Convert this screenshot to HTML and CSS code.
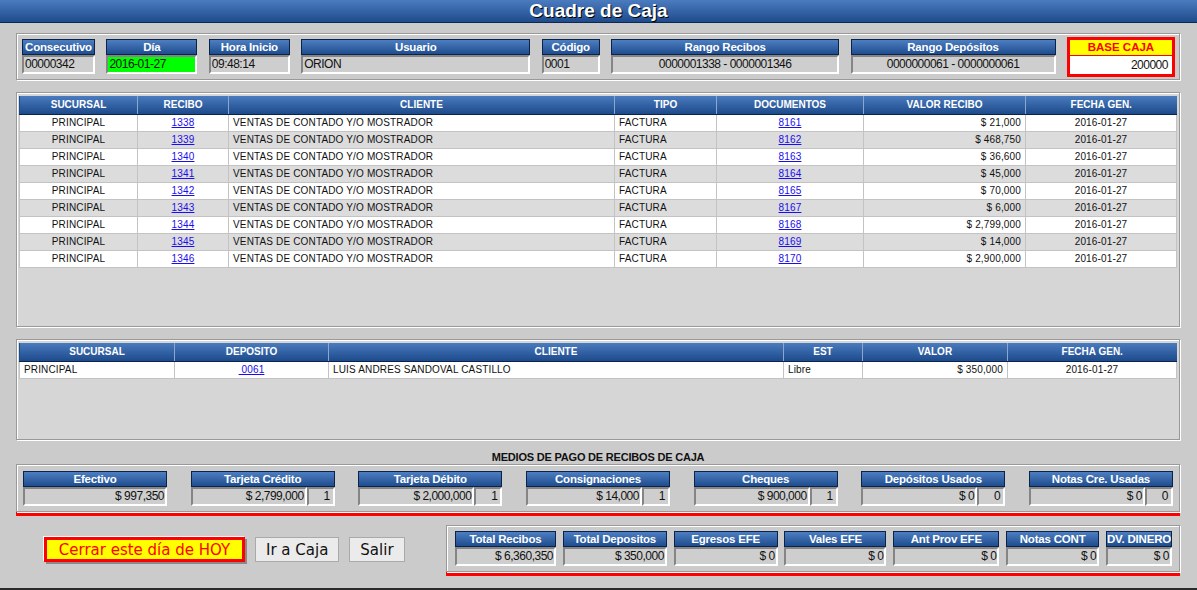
FILE: index.html
```html
<!DOCTYPE html>
<html lang="es">

<head>
    <meta charset="UTF-8">
    <title>Cuadre de Caja</title>
    <link rel="stylesheet" href="styles.css">
</head>

<body>
    <div class="page">
        <div class="titlebar">Cuadre de Caja</div>

        <div class="content">
            <!-- Datos del cuadre -->
            <div class="panel info">
                <div class="field w73">
                    <div class="fh">Consecutivo</div>
                    <div class="fv">00000342</div>
                </div>
                <div class="field w91">
                    <div class="fh">Día</div>
                    <div class="fv green">2016-01-27</div>
                </div>
                <div class="field w81">
                    <div class="fh">Hora Inicio</div>
                    <div class="fv">09:48:14</div>
                </div>
                <div class="field w229">
                    <div class="fh">Usuario</div>
                    <div class="fv">ORION</div>
                </div>
                <div class="field w58">
                    <div class="fh">Código</div>
                    <div class="fv">0001</div>
                </div>
                <div class="field w228">
                    <div class="fh">Rango Recibos</div>
                    <div class="fv center">0000001338 - 0000001346</div>
                </div>
                <div class="field w205">
                    <div class="fh">Rango Depósitos</div>
                    <div class="fv center">0000000061 - 0000000061</div>
                </div>
                <div class="base">
                    <div class="base-h">BASE CAJA</div>
                    <div class="base-v">200000</div>
                </div>
            </div>

            <!-- Recibos -->
            <div class="panel grid-panel recibos">
                <table class="grid">
                    <colgroup>
                        <col style="width:118px"><col style="width:91px"><col style="width:386px">
                        <col style="width:102px"><col style="width:147px"><col style="width:162px"><col>
                    </colgroup>
                    <thead>
                        <tr>
                            <th>SUCURSAL</th>
                            <th>RECIBO</th>
                            <th>CLIENTE</th>
                            <th>TIPO</th>
                            <th>DOCUMENTOS</th>
                            <th>VALOR RECIBO</th>
                            <th>FECHA GEN.</th>
                        </tr>
                    </thead>
                    <tbody>
                        <tr><td class="c">PRINCIPAL</td><td class="c"><a href="#">1338</a></td><td>VENTAS DE CONTADO Y/O MOSTRADOR</td><td>FACTURA</td><td class="c"><a href="#">8161</a></td><td class="r">$ 21,000</td><td class="c">2016-01-27</td></tr>
                        <tr><td class="c">PRINCIPAL</td><td class="c"><a href="#">1339</a></td><td>VENTAS DE CONTADO Y/O MOSTRADOR</td><td>FACTURA</td><td class="c"><a href="#">8162</a></td><td class="r">$ 468,750</td><td class="c">2016-01-27</td></tr>
                        <tr><td class="c">PRINCIPAL</td><td class="c"><a href="#">1340</a></td><td>VENTAS DE CONTADO Y/O MOSTRADOR</td><td>FACTURA</td><td class="c"><a href="#">8163</a></td><td class="r">$ 36,600</td><td class="c">2016-01-27</td></tr>
                        <tr><td class="c">PRINCIPAL</td><td class="c"><a href="#">1341</a></td><td>VENTAS DE CONTADO Y/O MOSTRADOR</td><td>FACTURA</td><td class="c"><a href="#">8164</a></td><td class="r">$ 45,000</td><td class="c">2016-01-27</td></tr>
                        <tr><td class="c">PRINCIPAL</td><td class="c"><a href="#">1342</a></td><td>VENTAS DE CONTADO Y/O MOSTRADOR</td><td>FACTURA</td><td class="c"><a href="#">8165</a></td><td class="r">$ 70,000</td><td class="c">2016-01-27</td></tr>
                        <tr><td class="c">PRINCIPAL</td><td class="c"><a href="#">1343</a></td><td>VENTAS DE CONTADO Y/O MOSTRADOR</td><td>FACTURA</td><td class="c"><a href="#">8167</a></td><td class="r">$ 6,000</td><td class="c">2016-01-27</td></tr>
                        <tr><td class="c">PRINCIPAL</td><td class="c"><a href="#">1344</a></td><td>VENTAS DE CONTADO Y/O MOSTRADOR</td><td>FACTURA</td><td class="c"><a href="#">8168</a></td><td class="r">$ 2,799,000</td><td class="c">2016-01-27</td></tr>
                        <tr><td class="c">PRINCIPAL</td><td class="c"><a href="#">1345</a></td><td>VENTAS DE CONTADO Y/O MOSTRADOR</td><td>FACTURA</td><td class="c"><a href="#">8169</a></td><td class="r">$ 14,000</td><td class="c">2016-01-27</td></tr>
                        <tr><td class="c">PRINCIPAL</td><td class="c"><a href="#">1346</a></td><td>VENTAS DE CONTADO Y/O MOSTRADOR</td><td>FACTURA</td><td class="c"><a href="#">8170</a></td><td class="r">$ 2,900,000</td><td class="c">2016-01-27</td></tr>
                    </tbody>
                </table>
            </div>

            <!-- Depositos -->
            <div class="panel grid-panel depositos">
                <table class="grid">
                    <colgroup>
                        <col style="width:155px"><col style="width:154px"><col style="width:455px">
                        <col style="width:79px"><col style="width:145px"><col>
                    </colgroup>
                    <thead>
                        <tr>
                            <th>SUCURSAL</th>
                            <th>DEPOSITO</th>
                            <th>CLIENTE</th>
                            <th>EST</th>
                            <th>VALOR</th>
                            <th>FECHA GEN.</th>
                        </tr>
                    </thead>
                    <tbody>
                        <tr><td>PRINCIPAL</td><td class="c"><a href="#">&nbsp;0061</a></td><td>LUIS ANDRES SANDOVAL CASTILLO</td><td>Libre</td><td class="r">$ 350,000</td><td class="c">2016-01-27</td></tr>
                    </tbody>
                </table>
            </div>

            <div class="section-title">MEDIOS DE PAGO DE RECIBOS DE CAJA</div>

            <!-- Medios de pago -->
            <div class="panel medios red-line">
                <div class="field w144">
                    <div class="fh">Efectivo</div>
                    <div class="fv right">$ 997,350</div>
                </div>
                <div class="field w144">
                    <div class="fh">Tarjeta Crédito</div>
                    <div class="fv-row"><div class="fv right">$ 2,799,000</div><div class="fv count">1</div></div>
                </div>
                <div class="field w144">
                    <div class="fh">Tarjeta Débito</div>
                    <div class="fv-row"><div class="fv right">$ 2,000,000</div><div class="fv count">1</div></div>
                </div>
                <div class="field w144">
                    <div class="fh">Consignaciones</div>
                    <div class="fv-row"><div class="fv right">$ 14,000</div><div class="fv count">1</div></div>
                </div>
                <div class="field w144">
                    <div class="fh">Cheques</div>
                    <div class="fv-row"><div class="fv right">$ 900,000</div><div class="fv count">1</div></div>
                </div>
                <div class="field w144">
                    <div class="fh">Depósitos Usados</div>
                    <div class="fv-row"><div class="fv right">$ 0</div><div class="fv count">0</div></div>
                </div>
                <div class="field w144">
                    <div class="fh">Notas Cre. Usadas</div>
                    <div class="fv-row"><div class="fv right">$ 0</div><div class="fv count">0</div></div>
                </div>
            </div>

            <div class="bottom">
                <div class="buttons">
                    <button class="btn btn-cerrar">Cerrar este día de HOY</button>
                    <button class="btn">Ir a Caja</button>
                    <button class="btn">Salir</button>
                </div>

                <div class="panel totales red-line">
                    <div class="field w101">
                        <div class="fh">Total Recibos</div>
                        <div class="fv right">$ 6,360,350</div>
                    </div>
                    <div class="field w104">
                        <div class="fh">Total Depositos</div>
                        <div class="fv right">$ 350,000</div>
                    </div>
                    <div class="field w104">
                        <div class="fh">Egresos EFE</div>
                        <div class="fv right">$ 0</div>
                    </div>
                    <div class="field w102">
                        <div class="fh">Vales EFE</div>
                        <div class="fv right">$ 0</div>
                    </div>
                    <div class="field w106">
                        <div class="fh">Ant Prov EFE</div>
                        <div class="fv right">$ 0</div>
                    </div>
                    <div class="field w93">
                        <div class="fh">Notas CONT</div>
                        <div class="fv right">$ 0</div>
                    </div>
                    <div class="field w66">
                        <div class="fh">DV. DINERO</div>
                        <div class="fv right">$ 0</div>
                    </div>
                </div>
            </div>
        </div>
    </div>
</body>

</html>
```

FILE: styles.css
```css
/* General Reset */
* {
    margin: 0;
    padding: 0;
    box-sizing: border-box;
}

body {
    font-family: 'Liberation Sans', Arial, sans-serif;
    background-color: #cbcbcb;
    color: #111;
}

.page {
    height: 590px;
    border-bottom: 2px solid #2b2b2b;
    overflow: hidden;
}

/* Title bar */
.titlebar {
    height: 23px;
    background: linear-gradient(#4b7cbf, #1e4b8c);
    border-bottom: 1px solid #10284f;
    color: white;
    text-align: center;
    font-size: 19px;
    font-weight: bold;
    line-height: 21px;
    text-shadow: 1px 1px 0 #000;
}

.content {
    padding: 10px 17px 0 16px;
}

/* Grooved panels */
.panel {
    border: 1px solid #999;
    box-shadow: inset 1px 1px 0 #fff, 1px 1px 0 #fff;
}

/* Field blocks (blue header + sunken value) */
.field {
    display: flex;
    flex-direction: column;
}

.fh {
    height: 16px;
    background: linear-gradient(#4d7ec1, #1f4d8f);
    border: 1px solid #0c2349;
    color: white;
    font-size: 11.5px;
    font-weight: bold;
    letter-spacing: -0.2px;
    line-height: 14px;
    text-align: center;
    white-space: nowrap;
    overflow: hidden;
}

.fv {
    height: 19px;
    background-color: #cecece;
    border: 2px solid;
    border-color: #858585 #fff #fff #858585;
    font-size: 12px;
    letter-spacing: -0.5px;
    line-height: 15px;
    padding: 0 1px;
    white-space: nowrap;
    overflow: hidden;
}

.fv.green {
    background-color: #00ff00;
}

.fv.center {
    text-align: center;
}

.fv.right {
    text-align: right;
}

.fv-row {
    display: flex;
}

.fv-row .fv.right {
    flex: 1;
}

.fv.count {
    width: 28px;
    text-align: right;
    padding-right: 3px;
}

.w58 { width: 58px; }
.w66 { width: 66px; }
.w73 { width: 73px; }
.w81 { width: 81px; }
.w91 { width: 91px; }
.w93 { width: 93px; }
.w101 { width: 101px; }
.w102 { width: 102px; }
.w104 { width: 104px; }
.w106 { width: 106px; }
.w144 { width: 144px; }
.w205 { width: 205px; }
.w228 { width: 228px; }
.w229 { width: 229px; }

/* Top info panel */
.info {
    height: 47px;
    display: flex;
    justify-content: space-between;
    align-items: center;
    padding: 0 4px 0 5px;
}

.base {
    width: 108px;
    border: 3px solid #ff0000;
}

.base-h {
    height: 15px;
    background-color: #ffff00;
    color: #ff0000;
    font-size: 11.5px;
    font-weight: bold;
    line-height: 15px;
    text-align: center;
}

.base-v {
    height: 19px;
    background-color: white;
    font-size: 12px;
    letter-spacing: -0.5px;
    line-height: 19px;
    text-align: right;
    padding-right: 4px;
    border-top: 1px solid #ff0000;
}

/* Data grids */
.grid-panel {
    margin-top: 12px;
    background-color: #d6d6d6;
    padding: 3px 2px;
}

.recibos {
    height: 235px;
}

.depositos {
    height: 101px;
}

.grid {
    width: 100%;
    table-layout: fixed;
    border-collapse: collapse;
}

.grid th {
    height: 18px;
    background: linear-gradient(#4a7bbe, #1d4a8b);
    border-left: 1px solid #8ba6cf;
    border-bottom: 1px solid #0c2349;
    color: white;
    font-size: 10px;
    font-weight: bold;
    text-align: center;
}

.grid th:first-child {
    border-left: 1px solid #1d4a8b;
}

.grid td {
    height: 17px;
    border: 1px solid #c3c3c3;
    background-color: white;
    font-size: 10px;
    letter-spacing: 0.15px;
    padding: 0 4px;
    white-space: nowrap;
    overflow: hidden;
}

.grid tbody tr:nth-child(even) td {
    background-color: #dcdcdc;
}

.grid td.c {
    text-align: center;
}

.grid td.r {
    text-align: right;
}

.grid a {
    color: #1a0dee;
    text-decoration: underline;
}

.section-title {
    margin-top: 10px;
    height: 14px;
    text-align: center;
    font-size: 11px;
    font-weight: bold;
    letter-spacing: -0.2px;
    line-height: 14px;
}

/* Payment methods */
.red-line {
    box-shadow: inset 1px 1px 0 #fff, 1px 1px 0 #fff, 0 4px 0 #ff0000;
}

.medios {
    height: 48px;
    display: flex;
    justify-content: space-between;
    align-items: center;
    padding: 0 6px;
}

/* Bottom row */
.bottom {
    display: flex;
    justify-content: space-between;
    align-items: center;
    margin-top: 13px;
}

.buttons {
    display: flex;
    gap: 10px;
    padding-left: 28px;
    margin-top: 2px;
}

.btn {
    height: 25px;
    padding: 0 10px;
    background-color: #ebebeb;
    border: 1px solid #aaa;
    font-family: 'DejaVu Sans', sans-serif;
    font-size: 15px;
    color: #111;
}

.btn-cerrar {
    width: 201px;
    background-color: #ffff00;
    border: 3px solid #ff0000;
    color: #ff0000;
    box-shadow: -1px -1px 0 #fff, 2px 2px 0 #8a8a8a;
}

.totales {
    width: 734px;
    height: 47px;
    display: flex;
    justify-content: space-between;
    align-items: center;
    padding: 0 7px 0 8px;
}
```
